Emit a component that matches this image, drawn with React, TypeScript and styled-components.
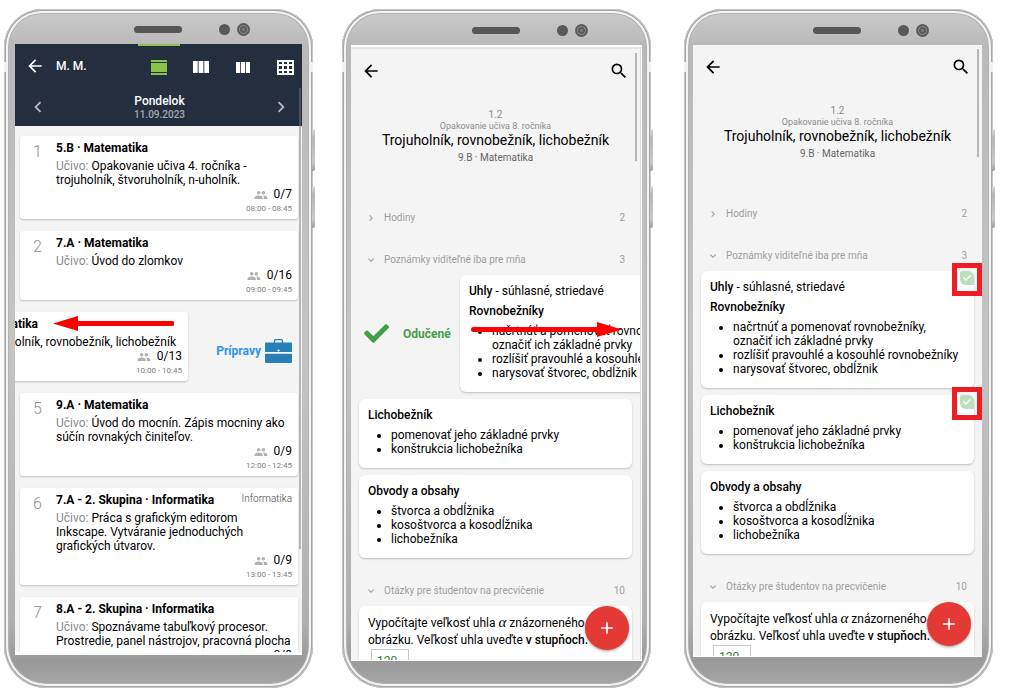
import React from "react";
import styled, { createGlobalStyle, css } from "styled-components";
import { FaCheck } from "react-icons/fa";
import {
  MdArrowBack,
  MdSearch,
  MdChevronLeft,
  MdChevronRight,
  MdExpandMore,
  MdAdd,
} from "react-icons/md";

const Global = createGlobalStyle`
  *, *::before, *::after { box-sizing: border-box; }
  body {
    margin: 0;
    background: #fff;
    color: #000;
    font-family: Roboto, "Liberation Sans", sans-serif;
    font-size: 12px;
    line-height: 14px;
  }
  p, ul, h1, h2 { margin: 0; padding: 0; font-size: inherit; }
  button { border: 0; padding: 0; background: none; color: inherit; font: inherit; display: flex; }
`;

const Gallery = styled.main`
  display: grid;
  grid-template-columns: minmax(0, 338fr) minmax(0, 342fr) minmax(0, 309fr);
  height: 100vh;
  min-height: 480px;
  padding: 9px 42px 5px 4px;
  overflow: hidden;
`;

/* ---------- device ---------- */

const Device = styled.section<{ $after: number; $left: number; $right: number; $chin: number }>`
  position: relative;
  min-width: 0;
  min-height: 0;
  display: flex;
  flex-direction: column;
  margin-right: ${(p) => p.$after}px;
  padding: 0 ${(p) => p.$right}px ${(p) => p.$chin}px ${(p) => p.$left}px;
  border-radius: 38px 38px 42px 42px;
  background: linear-gradient(
    180deg,
    #cbcbcb 0,
    #b9b9b9 36px,
    #c4c4c4 50%,
    #b0b0b0 90%,
    #999 96%,
    #a8a8a8 100%
  );
  box-shadow:
    inset 0 0 0 1px #c6c6c6,
    inset 0 0 0 2px #a6a6a6,
    inset 0 0 0 4px #f4f4f4,
    inset 0 0 0 5px #b2b2b2;
`;

const Antenna = styled.span`
  position: absolute;
  top: 53px;
  left: 0;
  right: 0;
  height: 10px;
  border: solid #f2f2f2;
  border-width: 0 4px;
`;

const SideKey = styled.span<{ $top: number }>`
  position: absolute;
  top: ${(p) => p.$top}px;
  right: -2px;
  width: 3px;
  height: 42px;
  border-radius: 0 2px 2px 0;
  background: linear-gradient(180deg, #d8d8d8, #b8b8b8 20%, #c8c8c8 80%, #9e9e9e);
`;

const Forehead = styled.div<{ $h: number }>`
  flex: none;
  display: flex;
  align-items: center;
  height: ${(p) => p.$h}px;
  padding-top: 6px;
`;

const Speaker = styled.span`
  width: 48px;
  height: 7px;
  margin-left: 41.5%;
  border-radius: 4px;
  background: #575555;
`;

const Sensor = styled.span`
  width: 11px;
  height: 11px;
  margin-left: 37px;
  border-radius: 50%;
  background: #5a5858;
`;

const Lens = styled.span`
  width: 13px;
  height: 13px;
  margin-left: 7px;
  border-radius: 50%;
  background: radial-gradient(circle, #7b7b7b 0 1px, #5c5c5c 2px 3px, #858585 4px, #5c5a5a 5px);
`;

const Screen = styled.div<{ $thin?: boolean }>`
  flex: 1;
  min-height: 0;
  display: flex;
  overflow: hidden;
  border-bottom: ${(p) => (p.$thin ? 1 : 3)}px solid #fff;
  background: #f4f4f4;
`;

const Framed = styled(Screen)`
  padding: 2px 1px 0 0;
  background: #fff;
`;

const View = styled.div<{ $edged?: boolean }>`
  position: relative;
  flex: 1;
  min-width: 0;
  overflow: hidden;
  background: #f4f4f4;
  ${(p) =>
    p.$edged &&
    css`
      border-top: 2px solid #e4e4e4;
      border-right: 1px solid #dcdcdc;
    `}
`;

const Scrollbar = styled.span<{ $top: number; $h: number; $right: number }>`
  position: absolute;
  z-index: 3;
  top: ${(p) => p.$top}px;
  right: ${(p) => p.$right}px;
  width: 2px;
  height: ${(p) => p.$h}px;
  background: rgba(120, 120, 120, 0.5);
`;

type PhoneProps = {
  after: number;
  left: number;
  right: number;
  chin: number;
  top: number;
  children: React.ReactNode;
};

function Phone({ after, left, right, chin, top, children }: PhoneProps) {
  return (
    <Device $after={after} $left={left} $right={right} $chin={chin}>
      <Antenna />
      <SideKey $top={120} />
      <SideKey $top={177} />
      <Forehead $h={top}>
        <Speaker />
        <Sensor />
        <Lens />
      </Forehead>
      {children}
    </Device>
  );
}

/* ---------- icons ---------- */

const DayIcon = () => (
  <svg width="16" height="15" viewBox="0 0 16 15" fill="currentColor">
    <path d="M0 0h16v2H0zM0 3h16v9H0zM0 13h16v2H0z" />
  </svg>
);

const WeekIcon = ({ width }: { width: number }) => (
  <svg width={width} height={width === 16 ? 12 : 11} viewBox="0 0 16 12" preserveAspectRatio="none" fill="currentColor">
    <path d="M0 0h4.700v12H0zM5.600 0h4.800v12H5.600zM11.300 0H16v12h-4.700z" />
  </svg>
);

const GridIcon = () => (
  <svg width="17" height="15" viewBox="0 0 17 15" fill="currentColor" fillRule="evenodd">
    <path d="M0 0h17v15H0zM2 2v2h3V2zM7 2v2h3V2zM12 2v2h3V2zM2 6v3h3V6zM7 6v3h3V6zM12 6v3h3V6zM2 11v2h3v-2zM7 11v2h3v-2zM12 11v2h3v-2z" />
  </svg>
);

const PeopleIcon = () => (
  <svg width="14" height="14" viewBox="0 0 24 24" fill="currentColor">
    <path d="M16 11c1.660 0 3-1.340 3-3s-1.340-3-3-3-3 1.340-3 3 1.340 3 3 3zm-8 0c1.660 0 3-1.340 3-3S9.660 5 8 5 5 6.340 5 8s1.340 3 3 3zm0 2c-2.330 0-7 1.170-7 3.500V19h14v-2.500c0-2.330-4.670-3.500-7-3.500zm8 0c-.290 0-.620.020-.970.050 1.160.840 1.970 1.970 1.970 3.450V19h6v-2.500c0-2.330-4.670-3.500-7-3.500z" />
  </svg>
);

const BriefcaseIcon = () => (
  <svg width="27" height="24" viewBox="0 0 27 24">
    <path d="M9.500 4V2q0-1.300 1.300-1.300h5.400q1.300 0 1.300 1.300v2" fill="none" stroke="currentColor" strokeWidth="1.300" />
    <path d="M1 3.500h25q1 0 1 1V13H0V4.500q0-1 1-1zM0 14.500h27V23q0 1-1 1H1q-1 0-1-1z" fill="currentColor" />
    <path d="M0 13h27v1.500H0z" fill="#fff" />
    <circle cx="13.500" cy="11.500" r="1" fill="#fff" />
  </svg>
);

/* ---------- timetable ---------- */

const DayHeader = styled.header`
  height: 82px;
  background: #232f3e;
  color: #fff;
`;

const ViewBar = styled.nav`
  display: flex;
  align-items: center;
  height: 44px;
  margin-right: -4px;
  padding-left: 10px;
`;

const Owner = styled.span`
  flex: 1;
  padding-left: 11px;
  font-weight: 500;
`;

const ViewTab = styled.button<{ $active?: boolean }>`
  justify-content: center;
  align-items: center;
  width: 42px;
  height: 44px;
  color: ${(p) => (p.$active ? "#8bc34a" : "#fff")};
  border-top: 2px solid ${(p) => (p.$active ? "#8bc34a" : "transparent")};
`;

const DayPicker = styled.div`
  display: flex;
  align-items: center;
  justify-content: space-between;
  height: 38px;
  padding: 0 10px 0 12px;
  color: #b4b9c0;
`;

const DayName = styled.h1`
  padding-top: 2px;
  text-align: center;
  font-weight: 500;
  line-height: 13px;
  color: #fff;
`;

const DayDate = styled.small`
  display: block;
  font-size: 10px;
  font-weight: 500;
  color: #a4aab2;
`;

const LessonList = styled.div`
  display: flex;
  flex-direction: column;
  gap: 12px;
  padding: 10px 4px 0 5px;
`;

const cardLook = css`
  background: #fff;
  box-shadow: 0 1px 2px rgba(0, 0, 0, 0.22);
`;

const LessonCard = styled.article<{ $shift?: number }>`
  position: relative;
  ${cardLook}
  display: grid;
  grid-template-columns: 36px 1fr;
  padding: 5px 6px 3px 0;
  border-radius: 3px;
  ${(p) => p.$shift && `transform: translateX(${p.$shift}px);`}
`;

const LessonNo = styled.span`
  padding: 3px 0 0 13px;
  font-size: 16px;
  line-height: 16px;
  font-weight: 300;
  color: #8f8f8f;
`;

const LessonTitle = styled.h2`
  display: flex;
  justify-content: space-between;
  margin-bottom: 4px;
  font-weight: 700;
  white-space: nowrap;
`;

const Tag = styled.span`
  font-size: 10px;
  font-weight: 300;
  line-height: 12px;
  color: #444;
`;

const LessonText = styled.p`
  white-space: nowrap;
`;

const Muted = styled.span`
  color: #8a8a8a;
`;

const Attendance = styled.p`
  display: flex;
  justify-content: flex-end;
  align-items: center;
  gap: 6px;
  line-height: 15px;
  svg { color: #b0b0b0; }
`;

const Hours = styled.p`
  text-align: right;
  font-size: 8px;
  color: #808080;
`;

const SwipeRow = styled.div`
  position: relative;
`;

const PrepAction = styled.button`
  position: absolute;
  inset: 0 6px 0 auto;
  align-items: center;
  gap: 4px;
  padding-top: 8px;
  font-weight: 700;
  color: #2e93f0;
  svg { color: #2980b9; }
`;

const ArrowSvg = styled.svg<{ $x: number; $y: number }>`
  position: absolute;
  z-index: 2;
  left: ${(p) => p.$x}px;
  top: ${(p) => p.$y}px;
`;

type Lesson = {
  no: number;
  title: string;
  text: React.ReactNode;
  count: string;
  hours: string;
  tag?: string;
  shift?: number;
};

const lessons: Lesson[] = [
  {
    no: 1,
    title: "5.B · Matematika",
    text: <>Opakovanie učiva 4. ročníka -<br />trojuholník, štvoruholník, n-uholník.</>,
    count: "0/7",
    hours: "08:00 - 08:45",
  },
  { no: 2, title: "7.A · Matematika", text: "Úvod do zlomkov", count: "0/16", hours: "09:00 - 09:45" },
  {
    no: 3,
    title: "9.B · Matematika",
    text: "Trojuholník, rovnobežník, lichobežník",
    count: "0/13",
    hours: "10:00 - 10:45",
    shift: -110,
  },
  {
    no: 5,
    title: "9.A · Matematika",
    text: <>Úvod do mocnín. Zápis mocniny ako<br />súčín rovnakých činiteľov.</>,
    count: "0/9",
    hours: "12:00 - 12:45",
  },
  {
    no: 6,
    title: "7.A - 2. Skupina · Informatika",
    tag: "Informatika",
    text: <>Práca s grafickým editorom<br />Inkscape. Vytváranie jednoduchých<br />grafických útvarov.</>,
    count: "0/9",
    hours: "13:00 - 13:45",
  },
  {
    no: 7,
    title: "8.A - 2. Skupina · Informatika",
    text: <>Spoznávame tabuľkový procesor.<br />Prostredie, panel nástrojov, pracovná plocha</>,
    count: "0/8",
    hours: "14:00 - 14:45",
  },
];

function LessonItem({ lesson }: { lesson: Lesson }) {
  return (
    <LessonCard $shift={lesson.shift}>
      <LessonNo>{lesson.no}</LessonNo>
      <div>
        <LessonTitle>
          {lesson.title}
          {lesson.tag && <Tag>{lesson.tag}</Tag>}
        </LessonTitle>
        <LessonText>
          <Muted>Učivo:</Muted> {lesson.text}
        </LessonText>
        <Attendance>
          <PeopleIcon />
          {lesson.count}
        </Attendance>
        <Hours>{lesson.hours}</Hours>
      </div>
    </LessonCard>
  );
}

function Timetable() {
  return (
    <View>
      <DayHeader>
        <ViewBar>
          <button aria-label="Späť"><MdArrowBack size={20} /></button>
          <Owner>M. M.</Owner>
          <ViewTab $active aria-label="Deň"><DayIcon /></ViewTab>
          <ViewTab aria-label="Týždeň"><WeekIcon width={16} /></ViewTab>
          <ViewTab aria-label="Pracovný týždeň"><WeekIcon width={14} /></ViewTab>
          <ViewTab aria-label="Mriežka"><GridIcon /></ViewTab>
        </ViewBar>
        <DayPicker>
          <button aria-label="Predchádzajúci deň"><MdChevronLeft size={22} /></button>
          <DayName>
            Pondelok
            <DayDate>11.09.2023</DayDate>
          </DayName>
          <button aria-label="Nasledujúci deň"><MdChevronRight size={22} /></button>
        </DayPicker>
      </DayHeader>
      <LessonList>
        {lessons.map((l) =>
          l.shift ? (
            <SwipeRow key={l.no}>
              <PrepAction>
                Prípravy
                <BriefcaseIcon />
              </PrepAction>
              <LessonItem lesson={l} />
              <ArrowSvg $x={33} $y={4} width="121" height="16" viewBox="0 0 121 16" fill="#ff0000">
                <path d="M0 7.500 25 0v5h94a2.500 2.500 0 0 1 0 5H25v5z" />
              </ArrowSvg>
            </SwipeRow>
          ) : (
            <LessonItem key={l.no} lesson={l} />
          ),
        )}
      </LessonList>
      <Scrollbar $top={44} $h={461} $right={1} />
    </View>
  );
}

/* ---------- lesson notes ---------- */

const Toolbar = styled.nav`
  display: flex;
  justify-content: space-between;
  align-items: center;
  height: 44px;
  padding: 0 11px 0 10px;
`;

const TopicHead = styled.header`
  margin: 16px 0 38px;
  text-align: center;
  color: #8c8c8c;
`;

const TopicNo = styled.p`
  font-size: 10px;
  line-height: 12px;
`;

const TopicParent = styled.p`
  font-size: 9px;
  line-height: 10px;
`;

const TopicTitle = styled.h1`
  font-size: 14px;
  font-weight: 400;
  line-height: 18px;
  color: #000;
`;

const TopicClass = styled.p`
  margin-top: 2px;
  font-size: 10px;
  color: #666;
`;

const SectionHead = styled.button`
  align-items: center;
  width: 100%;
  height: 30px;
  padding: 0 15px 0 14px;
  font-size: 10px;
  color: #9e9e9e;
  & + &, div + & { margin-top: 12px; }
`;

const SectionName = styled.span`
  flex: 1;
  padding-left: 7px;
  text-align: left;
`;

const Cards = styled.div`
  display: flex;
  flex-direction: column;
  gap: 7px;
  padding: 0 8px 6px;
`;

const NoteCard = styled.article<{ $shift?: number }>`
  position: relative;
  ${cardLook}
  padding: 9px 9px 12px;
  border-radius: 6px;
  ${(p) => p.$shift && `transform: translateX(${p.$shift}px);`}
`;

const NoteText = styled.p`
  margin-bottom: 6px;
`;

const Strong = styled.b`
  font-weight: 500;
`;

const Bullets = styled.ul`
  padding-left: 23px;
  white-space: nowrap;
`;

const TaughtAction = styled.button`
  position: absolute;
  top: 0;
  bottom: 0;
  left: 5px;
  align-items: center;
  gap: 14px;
  font-weight: 700;
  color: #43a047;
`;

const TaughtBadge = styled.span`
  position: absolute;
  top: 0;
  right: 0;
  display: grid;
  place-items: center;
  width: 14px;
  height: 14px;
  border-radius: 2px 6px 0 6px;
  background: #bcdfbd;
  color: #fff;
`;

const Highlight = styled.span`
  position: absolute;
  top: -8px;
  right: -8px;
  width: 30px;
  height: 33px;
  border: 5px solid #ee1c25;
`;

const Question = styled.p`
  line-height: 17px;
  white-space: nowrap;
`;

const Alpha = styled.i`
  font-family: "Liberation Serif", serif;
  font-size: 15px;
  line-height: 14px;
`;

const Answer = styled.input`
  display: block;
  width: 38px;
  height: 24px;
  margin-left: 3px;
  padding: 0 0 0 5px;
  border: 1px solid #c8c8c8;
  background: #fff;
  font: inherit;
  color: #2e7d32;
`;

const AddButton = styled.button`
  position: absolute;
  z-index: 4;
  right: 11px;
  bottom: 10px;
  align-items: center;
  justify-content: center;
  width: 44px;
  height: 44px;
  border-radius: 50%;
  background: #e53935;
  color: #fff;
  box-shadow: 0 1px 3px rgba(0, 0, 0, 0.4);
`;

function Badge() {
  return (
    <>
      <TaughtBadge><FaCheck size={8} /></TaughtBadge>
      <Highlight />
    </>
  );
}

function LessonNotes({ swiping }: { swiping?: boolean }) {
  return (
    <View $edged={swiping}>
      <Toolbar>
        <button aria-label="Späť"><MdArrowBack size={20} /></button>
        <button aria-label="Hľadať"><MdSearch size={20} /></button>
      </Toolbar>
      <TopicHead>
        <TopicNo>1.2</TopicNo>
        <TopicParent>Opakovanie učiva 8. ročníka</TopicParent>
        <TopicTitle>Trojuholník, rovnobežník, lichobežník</TopicTitle>
        <TopicClass>9.B · Matematika</TopicClass>
      </TopicHead>
      <SectionHead>
        <MdChevronRight size={12} />
        <SectionName>Hodiny</SectionName>2
      </SectionHead>
      <SectionHead>
        <MdExpandMore size={12} />
        <SectionName>Poznámky viditeľné iba pre mňa</SectionName>3
      </SectionHead>
      <Cards>
        <SwipeRow>
          {swiping && (
            <TaughtAction>
              <FaCheck size={25} />
              Odučené
            </TaughtAction>
          )}
          <NoteCard $shift={swiping ? 101 : 0}>
            <NoteText><Strong>Uhly</Strong> - súhlasné, striedavé</NoteText>
            <NoteText><Strong>Rovnobežníky</Strong></NoteText>
            <Bullets>
              <li>načrtnúť a pomenovať rovnobežníky,<br />označiť ich základné prvky</li>
              <li>rozlíšiť pravouhlé a kosouhlé rovnobežníky</li>
              <li>narysovať štvorec, obdĺžnik</li>
            </Bullets>
            {!swiping && <Badge />}
          </NoteCard>
          {swiping && (
            <ArrowSvg $x={112} $y={47} width="151" height="16" viewBox="0 0 151 16" fill="#ff0000">
              <path d="M151 7.500 126 0v5H2.500a2.500 2.500 0 0 0 0 5H126v5z" />
            </ArrowSvg>
          )}
        </SwipeRow>
        <NoteCard>
          <NoteText><Strong>Lichobežník</Strong></NoteText>
          <Bullets>
            <li>pomenovať jeho základné prvky</li>
            <li>konštrukcia lichobežníka</li>
          </Bullets>
          {!swiping && <Badge />}
        </NoteCard>
        <NoteCard>
          <NoteText><Strong>Obvody a obsahy</Strong></NoteText>
          <Bullets>
            <li>štvorca a obdĺžnika</li>
            <li>kosoštvorca a kosodĺžnika</li>
            <li>lichobežníka</li>
          </Bullets>
        </NoteCard>
      </Cards>
      <SectionHead>
        <MdExpandMore size={12} />
        <SectionName>Otázky pre študentov na precvičenie</SectionName>10
      </SectionHead>
      <Cards>
        <NoteCard>
          <Question>
            Vypočítajte veľkosť uhla <Alpha>α</Alpha> znázorneného
            <br />
            obrázku. Veľkosť uhla uveďte <Strong>v stupňoch.</Strong>
          </Question>
          <Answer aria-label="Veľkosť uhla" defaultValue="120" />
        </NoteCard>
      </Cards>
      <Scrollbar $top={4} $h={108} $right={3} />
      <AddButton aria-label="Pridať"><MdAdd size={20} /></AddButton>
    </View>
  );
}

export default function App() {
  return (
    <>
      <Global />
      <Gallery>
        <Phone after={29} left={11} right={11} chin={33} top={35}>
          <Screen><Timetable /></Screen>
        </Phone>
        <Phone after={33} left={9} right={9} chin={27} top={36}>
          <Framed $thin><LessonNotes swiping /></Framed>
        </Phone>
        <Phone after={0} left={9} right={11} chin={31} top={36}>
          <Screen $thin><LessonNotes /></Screen>
        </Phone>
      </Gallery>
    </>
  );
}
